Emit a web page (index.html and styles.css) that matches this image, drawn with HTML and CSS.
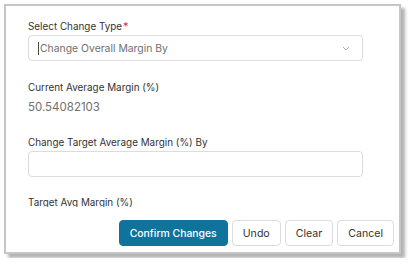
FILE: index.html
```html
<!DOCTYPE html>
<html lang="en">
<head>
    <meta charset="UTF-8">
    <meta name="viewport" content="width=device-width, initial-scale=1.0">
    <title>Change Margin</title>
    <link rel="stylesheet" href="styles.css">
</head>
<body>
    <div class="dialog">
        <div class="dialog-body">
            <div class="field">
                <label class="field-label">Select Change Type<span class="required">*</span></label>
                <div class="select-box">
                    <span class="select-value"><span class="caret"></span>Change Overall Margin By</span>
                    <svg class="chevron" width="8" height="5" viewBox="0 0 8 5">
                        <polyline points="1,1 4,4 7,1" fill="none" stroke="#b5b5b5" stroke-width="1"/>
                    </svg>
                </div>
            </div>
            <div class="field field-readonly">
                <label class="field-label">Current Average Margin (%)</label>
                <div class="field-value">50.54082103</div>
            </div>
            <div class="field field-input">
                <label class="field-label">Change Target Average Margin (%) By</label>
                <input class="text-input" type="text">
            </div>
            <div class="field">
                <label class="field-label">Target Avg Margin (%)</label>
                <div class="field-value">50.54082103</div>
            </div>
        </div>
        <div class="dialog-footer">
            <button class="btn btn-primary">Confirm Changes</button>
            <button class="btn">Undo</button>
            <button class="btn">Clear</button>
            <button class="btn">Cancel</button>
        </div>
    </div>
</body>
</html>
```

FILE: styles.css
```css
:root {
    --text-color: #333;
    --muted-color: #707070;
    --border-color: #dcdcdc;
    --primary-color: #0f739c;
    --required-color: #e8245c;
}

* {
    box-sizing: border-box;
    margin: 0;
    padding: 0;
}

body {
    background: #fff;
    font-family: Inter, "Noto Sans", sans-serif;
    font-size: 10px;
    color: var(--text-color);
}

.dialog {
    display: flex;
    flex-direction: column;
    width: 397px;
    height: 250px;
    margin: 4px;
    background: #fff;
    border: 2px solid #c6c6c6;
    box-shadow: 4px 4px 3px rgba(0, 0, 0, 0.3);
}

.dialog-body {
    flex: 1;
    overflow: hidden;
    padding: 13px 36px 0 22px;
}

.field {
    margin-bottom: 19px;
}

.field-readonly {
    margin-bottom: 21px;
}

.field-input {
    margin-bottom: 18px;
}

.field-label {
    display: block;
    line-height: 14px;
    margin-bottom: 2px;
    font-size: 9.9px;
}

.required {
    color: var(--required-color);
    margin-left: 1px;
    font-size: 11px;
}

.select-box {
    display: flex;
    align-items: center;
    justify-content: space-between;
    height: 26px;
    padding: 0 12px 0 9px;
    border: 1px solid var(--border-color);
    border-radius: 4px;
}

.select-value {
    display: flex;
    align-items: center;
    color: var(--muted-color);
    font-size: 10.4px;
}

.caret {
    display: inline-block;
    width: 1px;
    height: 13px;
    background: #444;
    margin-right: 1px;
}

.field-value {
    margin-top: 6px;
    line-height: 14px;
    color: var(--muted-color);
    font-size: 11.5px;
}

.text-input {
    display: block;
    width: 100%;
    height: 26px;
    border: 1px solid var(--border-color);
    border-radius: 4px;
    outline: none;
}

.dialog-footer {
    display: flex;
    justify-content: flex-end;
    gap: 4px;
    padding: 13px 5px 6px;
    background: #fff;
}

.btn {
    height: 26px;
    padding: 0 10px;
    font-family: Inter, "Noto Sans", sans-serif;
    font-size: 10.6px;
    color: var(--text-color);
    background: #fff;
    border: 1px solid var(--border-color);
    border-radius: 4px;
}

.btn-primary {
    padding: 0 10px;
    font-size: 10.4px;
    font-weight: 500;
    color: #fff;
    background: var(--primary-color);
    border-color: var(--primary-color);
}
```
